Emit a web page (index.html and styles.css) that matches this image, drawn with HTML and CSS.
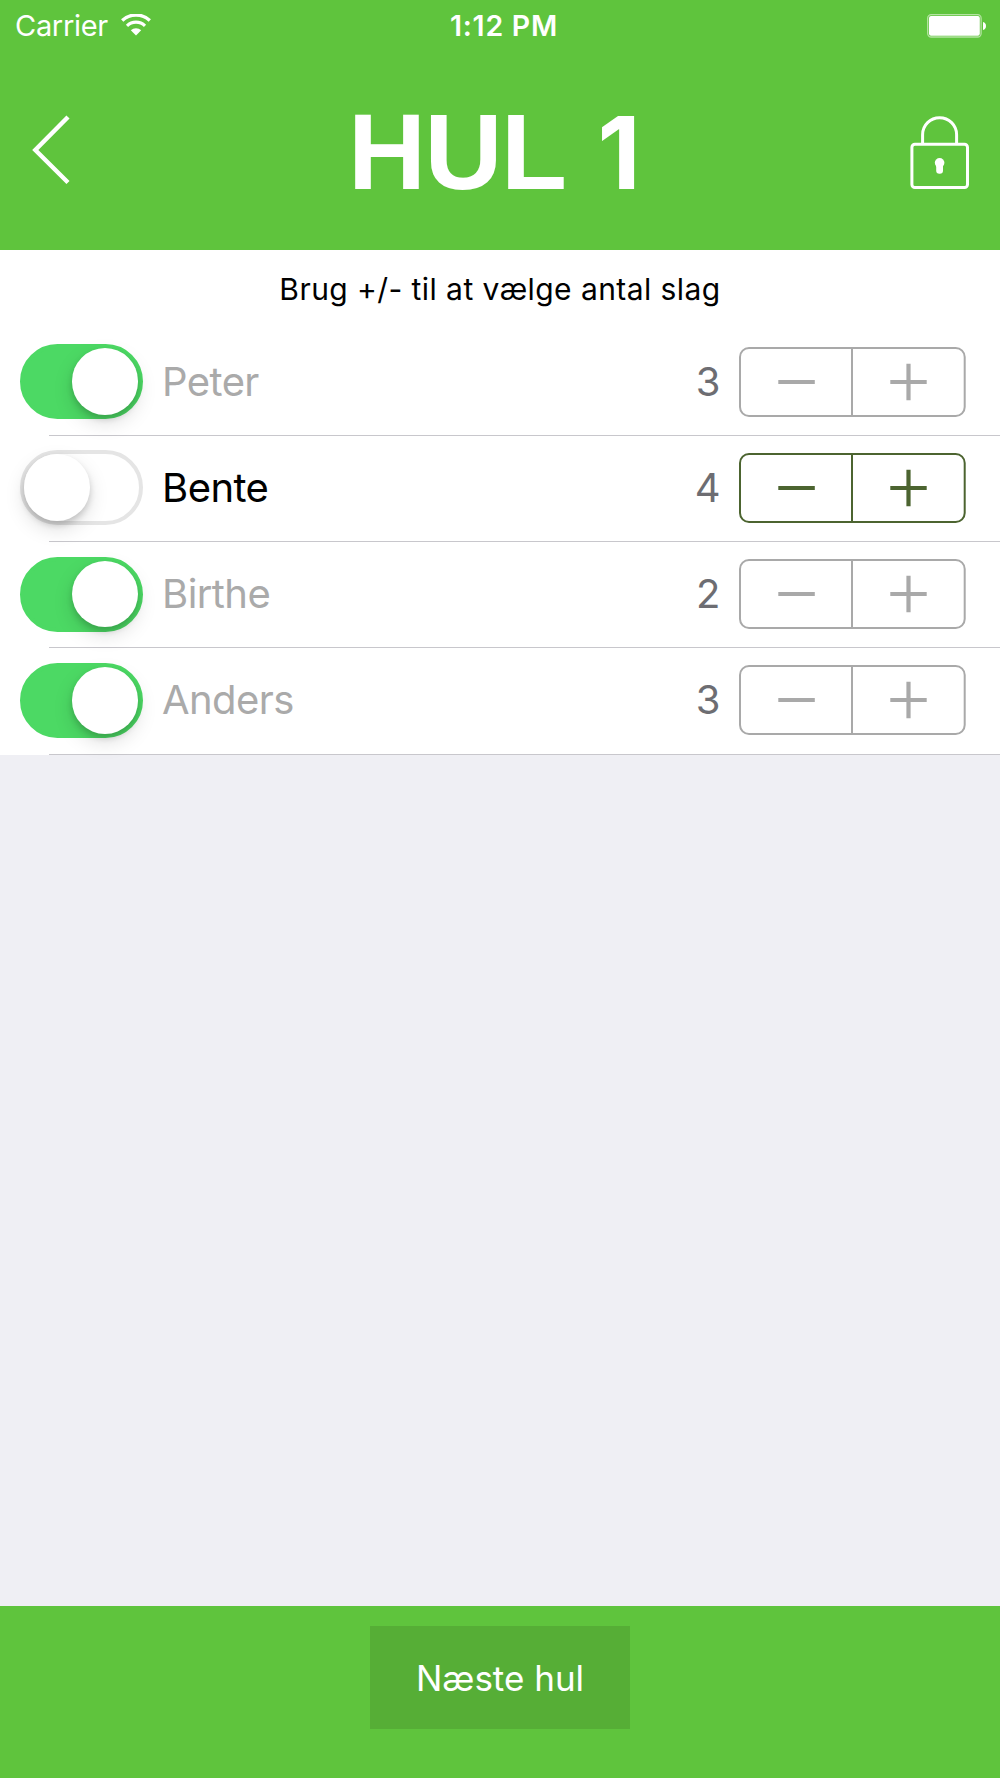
FILE: index.html
```html
<!DOCTYPE html>
<html lang="da">
<head>
<meta charset="utf-8">
<title>Hul 1</title>
<link rel="stylesheet" href="styles.css">
</head>
<body>
<div class="screen">
  <header class="header">
    <div class="status">
      <div class="carrier"><span class="carrier-name">Carrier</span>
        <svg class="wifi" width="30" height="22" viewBox="0 0 30 22"><g fill="none" stroke="#fff"><path d="M1.2 6.5A20 20 0 0 1 28.8 6.5" stroke-width="3.3"/><path d="M6 11.8A13 13 0 0 1 24 11.8" stroke-width="3.2"/></g><path d="M15 21.5L9.8 16.3A7.4 7.4 0 0 1 20.2 16.3Z" fill="#fff"/></svg>
      </div>
      <span class="clock">1:12 PM</span>
      <svg class="battery" width="60" height="24" viewBox="0 0 60 24"><rect x=".7" y=".7" width="53.4" height="22.3" rx="3.5" fill="none" stroke="#b5e3a3" stroke-width="1.3"/><rect x="2" y="2" width="50.8" height="19.7" rx="2" fill="#fff"/><path d="M56 8C60 8.5 60 15.5 56 16Z" fill="#fff"/></svg>
    </div>
    <div class="nav">
      <svg class="back" width="38" height="70" viewBox="0 0 38 70"><path d="M36 2L3.3 35L36 67.5" fill="none" stroke="#fff" stroke-width="4.4"/></svg>
      <h1 class="title">HUL<span class="hole">1</span></h1>
      <svg class="lock" width="60" height="74" viewBox="0 0 60 74"><g fill="none" stroke="#fff" stroke-width="3"><rect x="1.9" y="28.3" width="55.6" height="43.3" rx="3"/><path d="M12.6 28V18.7a17 17 0 0 1 34 0V28"/></g><circle cx="29.6" cy="46.8" r="4.8" fill="#fff"/><rect x="26.2" y="45" width="6.8" height="12.8" rx="3.2" fill="#fff"/></svg>
    </div>
  </header>
  <main class="content">
    <p class="hint"><span>Brug +/- til at vælge antal slag</span></p>
    <ul class="players">
      <li class="player done"><span class="switch on"><i class="knob"></i></span><span class="name">Peter</span><span class="count">3</span>
        <svg class="stepper" viewBox="0 0 227 70"><rect x="1" y="1" width="224.7" height="68" rx="9"/><path d="M113 1V69"/><path class="sign" d="M39.3 35H75.8M151.3 35H187.7M169.5 16.8V53.2"/></svg></li>
      <li class="player"><span class="switch"><i class="knob"></i></span><span class="name">Bente</span><span class="count">4</span>
        <svg class="stepper" viewBox="0 0 227 70"><rect x="1" y="1" width="224.7" height="68" rx="9"/><path d="M113 1V69"/><path class="sign" d="M39.3 35H75.8M151.3 35H187.7M169.5 16.8V53.2"/></svg></li>
      <li class="player done"><span class="switch on"><i class="knob"></i></span><span class="name">Birthe</span><span class="count">2</span>
        <svg class="stepper" viewBox="0 0 227 70"><rect x="1" y="1" width="224.7" height="68" rx="9"/><path d="M113 1V69"/><path class="sign" d="M39.3 35H75.8M151.3 35H187.7M169.5 16.8V53.2"/></svg></li>
      <li class="player done"><span class="switch on"><i class="knob"></i></span><span class="name">Anders</span><span class="count">3</span>
        <svg class="stepper" viewBox="0 0 227 70"><rect x="1" y="1" width="224.7" height="68" rx="9"/><path d="M113 1V69"/><path class="sign" d="M39.3 35H75.8M151.3 35H187.7M169.5 16.8V53.2"/></svg></li>
    </ul>
  </main>
  <footer class="footer"><button class="next">Næste hul</button></footer>
</div>
</body>
</html>
```
FILE: styles.css
```css
* { box-sizing: border-box; margin: 0; padding: 0; }
body { font-family: Inter, "Liberation Sans", sans-serif; background: #efeff4; }
.screen { width: 1000px; height: 1778px; display: flex; flex-direction: column; overflow: hidden; }
.header { height: 249.5px; flex: none; background: #5fc43d; color: #fff; }
.status { height: 50px; display: grid; grid-template-columns: 1fr auto 1fr; align-items: center; padding: 0 13px 0 14px; }
.carrier { display: flex; align-items: center; gap: 13px; font-size: 29px; line-height: 52px; padding-left: 1px; }
.carrier-name { letter-spacing: -.3px; }
.wifi { margin-bottom: 3px; }
.clock { font-size: 28.5px; font-weight: 600; line-height: 52px; padding-left: 7px; letter-spacing: .75px; }
.battery { justify-self: end; width: 60px; }
.nav { height: 199.5px; display: flex; align-items: flex-start; justify-content: space-between; padding: 65px 30px 0 31.5px; }
.title { font: bold 108px/124px "Liberation Sans", Arial, sans-serif; margin-top: -25px; padding-left: 9px; letter-spacing: -1.5px; white-space: nowrap; }
.hole { font-family: Inter, sans-serif; font-size: 100px; font-weight: 700; margin-left: 32px; letter-spacing: 0; }
.lock { margin-top: 1px; }
.content { flex: 1; }
.hint { height: 80.2px; background: #fff; color: #000; font-size: 30px; line-height: 79px; text-align: center; letter-spacing: .43px; }
.players { list-style: none; background: #fff; }
.player { height: 106.3px; display: flex; align-items: center; padding: 0 34px 2.5px 19.6px; background: linear-gradient(#c8c7cc, #c8c7cc) 48.5px 100% / 100% 1.3px no-repeat; }
.switch { width: 123.5px; height: 75px; border-radius: 38px; background: #fff; border: 4px solid #e5e5e5; flex: none; }
.switch.on { background: #4cd964; border-color: #4cd964; padding-left: 48px; }
.knob { display: block; width: 66.8px; height: 66.8px; border-radius: 50%; background: #fff; box-shadow: 0 8px 20px rgba(0,0,0,.13), 0 4px 6px rgba(0,0,0,.16); }
.name { font-size: 40px; margin-left: 19px; color: #000; line-height: 50px; letter-spacing: -.6px; }
.done .name { color: #aaa; }
.count { font-size: 40px; margin-left: auto; margin-right: 18.5px; color: #6d6d72; line-height: 50px; }
.stepper { width: 227px; height: 70px; flex: none; fill: none; stroke: #4c6430; stroke-width: 2; }
.sign { stroke-width: 4.2; }
.done .stepper { stroke: #a9a9a9; }
.footer { height: 172px; flex: none; background: #5fc43d; padding-top: 19.7px; text-align: center; }
.next { width: 260px; height: 103.5px; border: 0; padding-top: 1px; background: #56ae36; color: #fff; font: 35px/50px Inter, sans-serif; }
```
